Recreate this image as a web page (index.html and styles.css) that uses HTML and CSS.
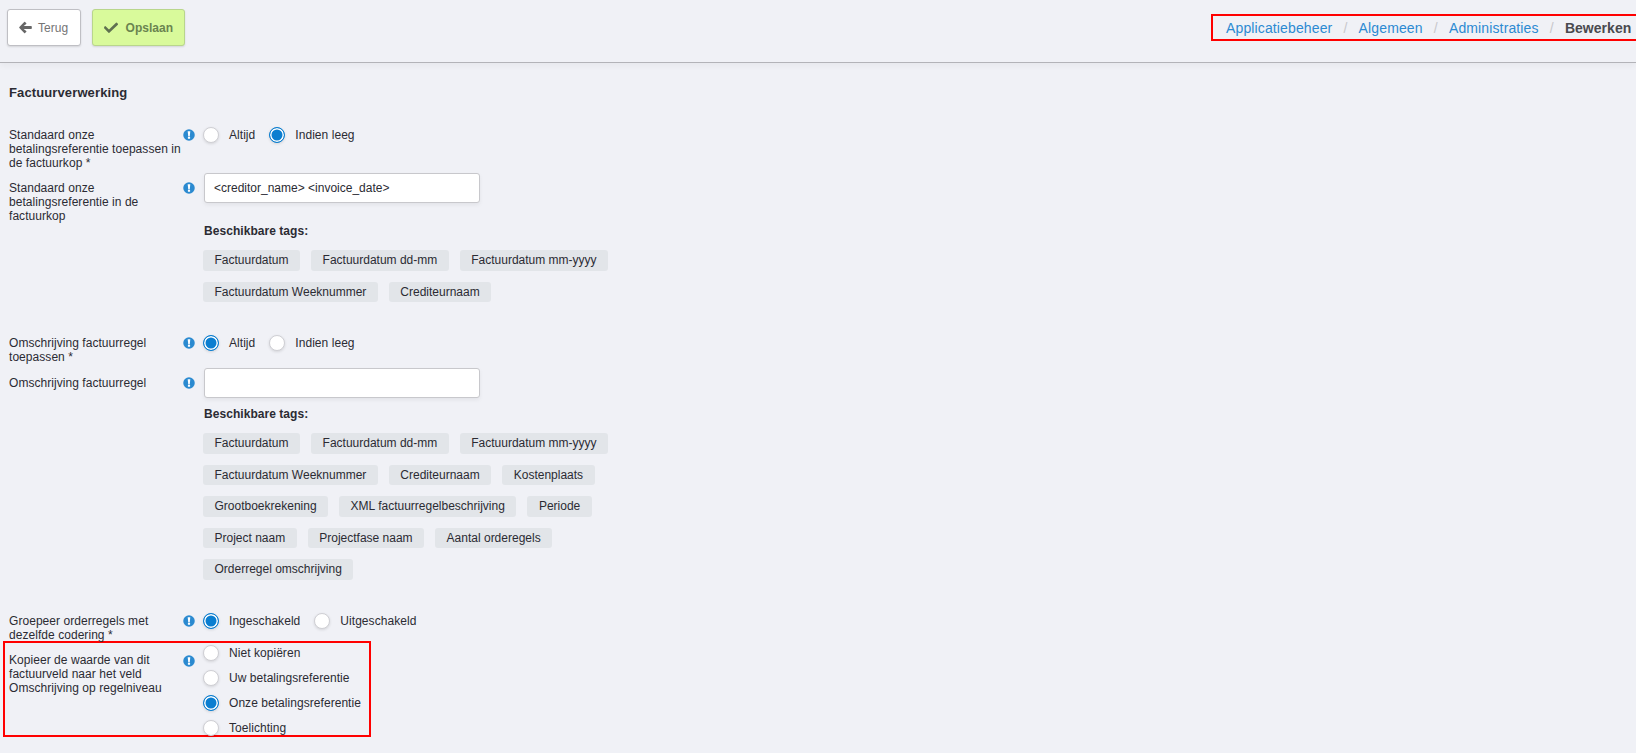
FILE: index.html
```html
<!DOCTYPE html>
<html lang="nl">
<head>
<meta charset="utf-8">
<title>Bewerken</title>
<link rel="stylesheet" href="styles.css">
</head>
<body>
<svg class="defs" width="0" height="0" aria-hidden="true">
  <symbol id="info" viewBox="0 0 12 12">
    <circle cx="6" cy="6" r="5.75" fill="#2b8ad0"/>
    <path d="M4.700 2.200h2.600l-.5 4.700H5.200z" fill="#fff"/>
    <rect x="4.900" y="7.600" width="2.200" height="2.200" rx=".4" fill="#fff"/>
  </symbol>
</svg>
<header class="topbar">
  <div class="actions">
    <button class="btn btn-back" type="button">
      <svg class="btn-icon" width="13" height="13" viewBox="0 0 14 13"><path d="M6.600.6 7.800 1.800a.7.7 0 0 1 0 1L5 5h8a.8.8 0 0 1 .8.8v1.400A.8.8 0 0 1 13 8H5l2.800 2.200a.7.7 0 0 1 0 1L6.600 12.400a.7.7 0 0 1-1 0L.4 7a.8.8 0 0 1 0-1L5.600.6a.7.7 0 0 1 1 0z" fill="#666"/></svg>
      Terug
    </button>
    <button class="btn btn-save" type="button">
      <svg class="btn-icon" width="14" height="11" viewBox="0 0 14 11"><path d="M1.600 4.300 5 7.600 12 .8a.6.6 0 0 1 .9 0l1 1a.6.6 0 0 1 0 .9L5.400 10.800a.6.6 0 0 1-.9 0L.1 6.300a.6.6 0 0 1 0-.9l.6-1.100a.6.6 0 0 1 .9 0z" fill="#5f7050"/></svg>
      Opslaan
    </button>
  </div>
  <nav class="crumbs">
    <a>Applicatiebeheer</a><span class="sep">/</span><a>Algemeen</a><span class="sep">/</span><a>Administraties</a><span class="sep">/</span><strong>Bewerken</strong>
  </nav>
</header>
<main class="content">
  <h2 class="section-title">Factuurverwerking</h2>

  <div class="row row-first">
    <div class="label">Standaard onze betalingsreferentie toepassen in de factuurkop *</div>
    <svg class="info"><use href="#info"/></svg>
    <div class="field radios">
      <label class="radio"><i class="dot"></i>Altijd</label>
      <label class="radio"><i class="dot on"></i>Indien leeg</label>
    </div>
  </div>

  <div class="row row-input-a">
    <div class="label">Standaard onze betalingsreferentie in de factuurkop</div>
    <svg class="info"><use href="#info"/></svg>
    <div class="field">
      <input class="text" type="text" value="&lt;creditor_name&gt; &lt;invoice_date&gt;">
      <div class="tags-title tags-title-a">Beschikbare tags:</div>
      <div class="tags">
        <span class="tag">Factuurdatum</span><span class="tag">Factuurdatum dd-mm</span><span class="tag">Factuurdatum mm-yyyy</span>
        <span class="tag">Factuurdatum Weeknummer</span><span class="tag">Crediteurnaam</span>
      </div>
    </div>
  </div>

  <div class="row row-desc">
    <div class="label">Omschrijving factuurregel toepassen *</div>
    <svg class="info"><use href="#info"/></svg>
    <div class="field radios">
      <label class="radio"><i class="dot on"></i>Altijd</label>
      <label class="radio"><i class="dot"></i>Indien leeg</label>
    </div>
  </div>

  <div class="row row-input-b">
    <div class="label label-mid">Omschrijving factuurregel</div>
    <svg class="info info-mid"><use href="#info"/></svg>
    <div class="field">
      <input class="text" type="text">
      <div class="tags-title tags-title-b">Beschikbare tags:</div>
      <div class="tags">
        <span class="tag">Factuurdatum</span><span class="tag">Factuurdatum dd-mm</span><span class="tag">Factuurdatum mm-yyyy</span>
        <span class="tag">Factuurdatum Weeknummer</span><span class="tag">Crediteurnaam</span><span class="tag">Kostenplaats</span>
        <span class="tag">Grootboekrekening</span><span class="tag">XML factuurregelbeschrijving</span><span class="tag">Periode</span>
        <span class="tag">Project naam</span><span class="tag">Projectfase naam</span><span class="tag">Aantal orderegels</span>
        <span class="tag">Orderregel omschrijving</span>
      </div>
    </div>
  </div>

  <div class="row row-group">
    <div class="label">Groepeer orderregels met dezelfde codering *</div>
    <svg class="info"><use href="#info"/></svg>
    <div class="field radios">
      <label class="radio"><i class="dot on"></i>Ingeschakeld</label>
      <label class="radio"><i class="dot"></i>Uitgeschakeld</label>
    </div>
  </div>

  <div class="row row-copy">
    <div class="label label-copy">Kopieer de waarde van dit factuurveld naar het veld Omschrijving op regelniveau</div>
    <svg class="info info-copy"><use href="#info"/></svg>
    <div class="field stack">
      <label class="radio"><i class="dot"></i>Niet kopiëren</label>
      <label class="radio"><i class="dot"></i>Uw betalingsreferentie</label>
      <label class="radio"><i class="dot on"></i>Onze betalingsreferentie</label>
      <label class="radio"><i class="dot"></i>Toelichting</label>
    </div>
  </div>
</main>
</body>
</html>
```
FILE: styles.css
```css
* { box-sizing: border-box; }
html, body { height: 100%; }
body {
  margin: 0;
  background: #f0f1f6;
  color: #2b2b33;
  font-family: "Liberation Sans", Arial, sans-serif;
  font-size: 12px;
  line-height: 14px;
  letter-spacing: .05px;
  overflow: hidden;
}
.defs { position: absolute; }

.topbar {
  height: 63px;
  padding: 9px 0 0 7px;
  display: flex;
  justify-content: space-between;
  align-items: flex-start;
  border-bottom: 1px solid #b3b3b8;
  box-shadow: 0 3px 6px rgba(0, 0, 0, .04);
}
.actions { display: flex; gap: 11px; }
.btn {
  height: 37px;
  display: flex;
  align-items: center;
  font-family: inherit;
  font-size: 12px;
  letter-spacing: .05px;
  border-radius: 3px;
  padding: 0;
  box-shadow: 0 1px 2px rgba(0, 0, 0, .12);
}
.btn-back {
  width: 74px;
  padding-left: 11px;
  gap: 6px;
  background: #fff;
  border: 1px solid #bfbfc4;
  color: #757575;
}
.btn-save {
  width: 93px;
  padding-left: 11px;
  gap: 7.500px;
  background: #d9fa9b;
  border: 1px solid #b9d68c;
  color: #6a8450;
  font-weight: 700;
}
.crumbs {
  margin-top: 5px;
  width: 425px;
  height: 27px;
  border: 2px solid #f00;
  border-right-width: 0;
  padding-left: 13px;
  display: flex;
  align-items: center;
  font-size: 14px;
  letter-spacing: .13px;
  color: #2c8ad2;
  white-space: nowrap;
}
.crumbs strong { color: #4a4a4f; font-size: 14px; letter-spacing: .03px; }
.sep { color: #c8c8cc; margin: 0 11.100px; }

.content { padding: 0 0 0 9px; }
.section-title {
  margin: 0;
  padding-top: 22px;
  font-size: 13px;
  line-height: 15px;
  letter-spacing: .12px;
  font-weight: 700;
}
.row {
  display: grid;
  grid-template-columns: 172px 16px 1fr;
  column-gap: 0;
  align-items: start;
}
.row-first { margin-top: 27px; min-height: 46px; }
.row-input-a { margin-top: 0; }
.row-desc { margin-top: 33px; }
.row-input-b { margin-top: 4px; }
.row-group { margin-top: 33.500px; }
.row-copy {
  margin-top: -1px;
  margin-left: -6px;
  width: 368px;
  height: 96px;
  padding-left: 4px;
  border: 2px solid #f00;
  grid-template-columns: 172px 16px 1fr;
}
.label { padding-top: 1px; }
.label-mid { padding-top: 8px; }
.label-copy { padding-top: 10px; }
.info { width: 12px; height: 12px; margin: 2px 0 0 2px; }
.info-mid { margin-top: 9px; }
.info-copy { margin-top: 12px; }
.row-input-a .label { padding-top: 8px; }
.row-input-a .info { margin-top: 9px; }

.field { min-width: 0; margin-left: 6px; }
.radios { display: flex; gap: 14px; }
.radio { display: flex; align-items: center; gap: 10px; height: 16px; }
.dot {
  width: 16px;
  height: 16px;
  border-radius: 50%;
  background: #fff;
  border: 1px solid #cfcfd4;
  box-shadow: 0 1px 3px rgba(0, 0, 0, .12);
  flex: none;
}
.dot.on {
  background: #0b7ed0;
  border: 1px solid #0b7ed0;
  box-shadow: inset 0 0 0 1.500px #fff, 0 1px 3px rgba(0, 0, 0, .12);
}
.stack {
  display: flex;
  flex-direction: column;
  gap: 9px;
  padding-top: 2px;
}
.text {
  display: block;
  width: 276px;
  height: 30px;
  margin-left: 1px;
  padding: 0 9px;
  background: #fff;
  border: 1px solid #c8c8cc;
  border-radius: 3px;
  font-family: inherit;
  font-size: 12px;
  color: #2b2b33;
  box-shadow: 0 2px 4px rgba(0, 0, 0, .06);
}
.tags-title { font-weight: 700; margin-left: 1px; }
.tags-title-a { margin-top: 21px; }
.tags-title-b { margin-top: 9px; }
.tags {
  display: flex;
  flex-wrap: wrap;
  gap: 11px;
  margin-top: 12px;
  max-width: 410px;
}
.tag {
  height: 20.500px;
  padding: 0 11.500px;
  line-height: 20px;
  letter-spacing: 0;
  background: #e2e5e9;
  border-radius: 3px;
  white-space: nowrap;
}
```
